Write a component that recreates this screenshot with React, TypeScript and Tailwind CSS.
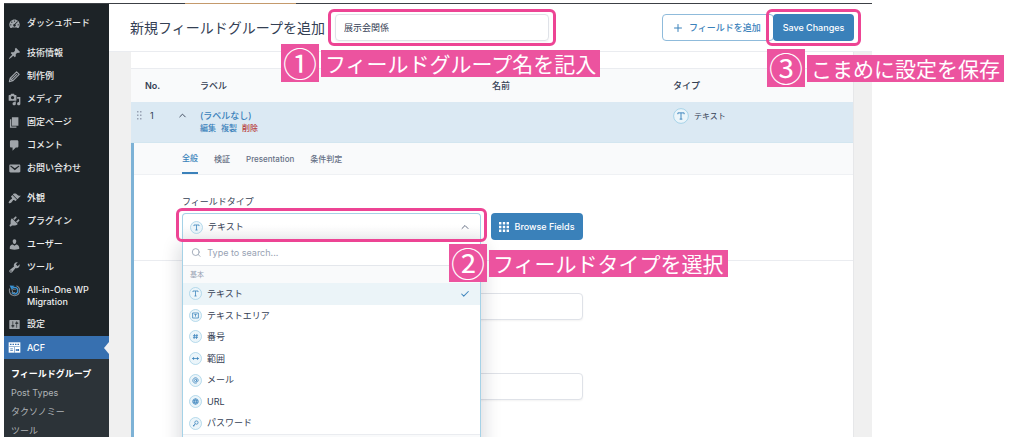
import React, { useState } from "react";
import { Check, ChevronUp, Plus, Search } from "lucide-react";

type MenuItem = { label: string; icon: React.ReactNode };

function Dash({ d, children }: { d?: string; children?: React.ReactNode }) {
  return (
    <svg viewBox="0 0 20 20" className="h-[13px] w-[13px] shrink-0" fill="currentColor" fillRule="evenodd" aria-hidden="true">
      {d && <path d={d} />}
      {children}
    </svg>
  );
}

const dashboardIcon = (
  <Dash d="M3.76 17h12.48C17.34 15.63 18 13.9 18 12c0-4.41-3.58-8-8-8s-8 3.59-8 8c0 1.9.66 3.63 1.76 5z">
    <g fill="#1d2327">
      <circle cx="10" cy="6.2" r="1" />
      <circle cx="5.8" cy="8" r="1" />
      <circle cx="4.3" cy="12" r="1" />
      <circle cx="15.7" cy="12" r="1" />
      <path d="M15.4 7.2l-4 4.1a2 2 0 1 1-1.3-.6l4.2-4.2z" />
      <path d="M6 15.4h8v.8H6z" />
    </g>
  </Dash>
);

const groups: MenuItem[][] = [
  [{ label: "ダッシュボード", icon: dashboardIcon }],
  [
    {
      label: "技術情報",
      icon: <Dash d="M10.44 3.02l1.82-1.82 6.36 6.35-1.83 1.82c-1.05-.68-2.48-.57-3.41.36l-.75.75c-.92.93-1.04 2.35-.35 3.41l-1.83 1.82-2.41-2.41-2.8 2.79c-.42.42-3.38 2.71-3.8 2.29s1.86-3.39 2.28-3.81l2.79-2.79L4.1 9.36l1.83-1.82c1.05.69 2.48.57 3.4-.36l.75-.75c.93-.92 1.05-2.35.36-3.41z" />,
    },
    {
      label: "制作例",
      icon: (
        <svg viewBox="0 0 20 20" className="h-[13px] w-[13px] shrink-0" fill="none" stroke="currentColor" strokeWidth="1.7" strokeLinejoin="round" aria-hidden="true">
          <path d="M13.2 2.8l4 4L7.3 16.6l-5.2 1.3 1.3-5.2zM5.6 14.4l8.2-8.2M3.5 12.8l3.8 3.8" />
        </svg>
      ),
    },
    {
      label: "メディア",
      icon: <Dash d="M13 11V4c0-.55-.45-1-1-1h-1.67L9 1H5L3.67 3H2c-.55 0-1 .45-1 1v7c0 .55.45 1 1 1h10c.55 0 1-.45 1-1zM7 4.5c1.38 0 2.5 1.12 2.5 2.5S8.38 9.5 7 9.5 4.5 8.38 4.5 7 5.62 4.5 7 4.5zM14 6h5v10.5c0 1.38-1.12 2.5-2.5 2.5S14 17.88 14 16.5s1.12-2.5 2.5-2.5c.17 0 .34.02.5.05V9h-3V6zm-4 8.05V13h2v3.5c0 1.38-1.12 2.5-2.5 2.5S7 17.88 7 16.5 8.12 14 9.5 14c.17 0 .34.02.5.05z" />,
    },
    { label: "固定ページ", icon: <Dash d="M6 15V2h10v13H6zm-1 1h8v2H3V5h2v11z" /> },
    { label: "コメント", icon: <Dash d="M5 2h9c1.1 0 2 .9 2 2v7c0 1.1-.9 2-2 2h-2l-5 5v-5H5c-1.1 0-2-.9-2-2V4c0-1.1.9-2 2-2z" /> },
    {
      label: "お問い合わせ",
      icon: <Dash d="M3.87 4h13.25C18.37 4 19 4.59 19 5.79v8.42c0 1.19-.63 1.79-1.88 1.79H3.87c-1.25 0-1.88-.6-1.88-1.79V5.79c0-1.2.63-1.79 1.88-1.79zm6.62 8.6l6.74-5.53c.24-.2.43-.66.13-1.07-.29-.41-.82-.42-1.17-.17l-5.7 3.86L4.8 5.83c-.35-.25-.88-.24-1.17.17-.3.41-.11.87.13 1.07z" />,
    },
  ],
  [
    {
      label: "外観",
      icon: <Dash d="M14.48 11.06L7.41 3.99l1.5-1.5c.5-.56 2.3-.47 3.51.32 1.21.8 1.43 1.28 2.91 2.1 1.18.64 2.45 1.26 4.45.85zm-.71.71L6.7 4.7 4.93 6.47c-.39.39-.39 1.02 0 1.41l1.06 1.06c.39.39.39 1.03 0 1.42-.6.6-1.43 1.11-2.21 1.69-.35.26-.7.53-1.01.84C1.43 14.23.4 16.08 1.4 17.07c.99 1 2.84-.03 4.18-1.36.31-.31.58-.66.85-1.02.57-.78 1.08-1.61 1.69-2.21.39-.39 1.02-.39 1.41 0l1.06 1.06c.39.39 1.02.39 1.41 0z" />,
    },
    {
      label: "プラグイン",
      icon: <Dash d="M13.11 4.36L9.87 7.6 8 5.73l3.24-3.24c.35-.34 1.05-.2 1.56.32.52.51.66 1.21.31 1.55zm-8 1.77l.91-1.12 9.01 9.01-1.19.84c-.71.71-2.63 1.16-3.82 1.16H6.14L4.9 17.26c-.59.59-1.54.59-2.12 0-.59-.58-.59-1.53 0-2.12l1.24-1.24v-3.88c0-1.13.4-3.19 1.09-3.89zm7.26 3.97l3.24-3.24c.34-.35 1.04-.21 1.55.31.52.51.66 1.21.31 1.55l-3.24 3.25z" />,
    },
    {
      label: "ユーザー",
      icon: <Dash d="M10 9.25c-2.27 0-2.73-3.44-2.73-3.44C7 4.02 7.82 2 9.97 2c2.16 0 2.98 2.02 2.71 3.81 0 0-.41 3.44-2.68 3.44zm0 2.57L12.72 10c2.39 0 4.52 2.33 4.52 4.53v2.49s-3.65 1.13-7.24 1.13c-3.65 0-7.24-1.13-7.24-1.13v-2.49c0-2.25 1.94-4.48 4.47-4.48z" />,
    },
    {
      label: "ツール",
      icon: <Dash d="M16.68 9.77c-1.34 1.34-3.3 1.67-4.95.99l-5.41 6.52c-.99.99-2.59.99-3.58 0s-.99-2.59 0-3.57l6.52-5.42c-.68-1.65-.35-3.61.99-4.95 1.28-1.28 3.12-1.62 4.72-1.06l-2.89 2.89 2.82 2.82 2.86-2.87c.53 1.58.18 3.39-1.08 4.65zM3.81 16.21c.4.39 1.04.39 1.43 0 .4-.4.4-1.04 0-1.43-.39-.4-1.03-.4-1.43 0-.39.39-.39 1.03 0 1.43z" />,
    },
    {
      label: "All-in-One WP Migration",
      icon: (
        <svg viewBox="0 0 20 20" className="h-[13px] w-[13px] shrink-0" fill="none" aria-hidden="true">
          <path d="M13 2.6A8 8 0 1 1 2.600 7" stroke="#7d8288" strokeWidth="1.8" />
          <path d="M5.500 8.500A5 5 0 1 1 6 13" stroke="#3a93d4" strokeWidth="2.200" />
          <path d="M2.500 2.200l7.500.6-5 5z" fill="#3a93d4" />
          <path d="M11 13a2.800 2.800 0 1 1 1-3.500" stroke="#8b9096" strokeWidth="1.500" />
        </svg>
      ),
    },
    {
      label: "設定",
      icon: <Dash d="M18 16V4c0-.55-.45-1-1-1H3c-.55 0-1 .45-1 1v12c0 .55.45 1 1 1h14c.55 0 1-.45 1-1zM8 11h1c.55 0 1 .45 1 1s-.45 1-1 1H8v1.5c0 .28-.22.5-.5.5s-.5-.22-.5-.5V13H6c-.55 0-1-.45-1-1s.45-1 1-1h1V5.5c0-.28.22-.5.5-.5s.5.22.5.5V11zm5-2h-1c-.55 0-1-.45-1-1s.45-1 1-1h1V5.5c0-.28.22-.5.5-.5s.5.22.5.5V7h1c.55 0 1 .45 1 1s-.45 1-1 1h-1v5.5c0 .28-.22.5-.5.5s-.5-.22-.5-.5V9z" />,
    },
  ],
];

function Sidebar() {
  return (
    <nav className="w-[105px] shrink-0 bg-[#1d2327] pt-2 text-[9px] font-medium text-[#eceded]">
      <div className="flex flex-col gap-[7px]">
        {groups.map((items, i) => (
          <ul key={i}>
            {items.map((item) => (
              <li key={item.label}>
                <a href="#" className="flex min-h-[23px] items-start gap-[6px] py-[5px] pl-1 leading-3">
                  <span className="text-[#a0a5aa]">{item.icon}</span>
                  <span className="w-[72px]">{item.label}</span>
                </a>
              </li>
            ))}
          </ul>
        ))}
      </div>
      <a href="#" aria-current="page" className="relative flex h-[23px] items-center gap-[6px] bg-[#3770b0] pl-1 text-white">
        <Dash>
          <path d="M1 2h18v16H1z" />
          <g fill="#3770b0">
            <path d="M2 8.600h16v.8H2zM9.600 9.400v8.600h.8V9.400z" />
            <path d="M3 4.200h2.400v2H3zM7 4.200h2.200v2H7zM10.800 4.200H13v2h-2.200zM14.600 4.200H17v2h-2.400z" />
            <path d="M3.500 11.600h4v1h-4zM3.500 14.400h4v1h-4zM12 12.400h5v3h-5z" />
          </g>
          <path d="M12.800 13.400h2.400v1h-2.400z" />
        </Dash>
        ACF
        <span className="absolute right-0 top-[6px] border-y-[6px] border-r-[5px] border-y-transparent border-r-[#f0f0f1]" />
      </a>
      <ul className="h-full bg-[#2c3338] pl-[7px] pt-[5px] font-normal leading-[19px] text-[#b0b3b7]">
        <li><a href="#" className="font-bold text-white">フィールドグループ</a></li>
        <li><a href="#">Post Types</a></li>
        <li><a href="#">タクソノミー</a></li>
        <li><a href="#">ツール</a></li>
      </ul>
    </nav>
  );
}

function Note({ mark, text, className }: { mark: string; text: string; className: string }) {
  return (
    <div className={`absolute z-30 flex items-center gap-[2px] whitespace-nowrap font-['Noto_Sans_CJK_JP',sans-serif] text-white ${className}`}>
      <span className="flex h-[38px] w-[38px] items-center justify-center bg-[#ec539f] text-[34px] leading-[38px]">{mark}</span>
      <span className="h-[27px] bg-[#ec539f] px-1 text-[21px] leading-[27px]">{text}</span>
    </div>
  );
}

function Frame({ className }: { className: string }) {
  return <span className={`pointer-events-none absolute z-20 rounded-md border-[3px] border-[#ed4494] ${className}`} />;
}

const glyphs: Record<string, React.ReactNode> = {
  text: <path d="M6.5 8V6.5h7V8M10 6.5v7M8.5 13.5h3" />,
  area: <path d="M6 6.5h8v7H6zM8.4 8.6h3.2M10 8.6v3" />,
  number: <path d="M8.8 6.5l-.8 7M12 6.5l-.8 7M6.5 8.8h7M6.5 11.2h7" />,
  range: (
    <>
      <path d="M6 10h8" />
      <path d="M7.4 8.6L5.8 10l1.6 1.4zM12.6 8.6l1.6 1.4-1.6 1.4z" fill="currentColor" />
    </>
  ),
  mail: (
    <>
      <circle cx="10" cy="10" r="1.5" />
      <path d="M11.5 8.5v2.2c0 1.3 2.2 1.2 2.2-.7a3.7 3.7 0 1 0-1.6 3" />
    </>
  ),
  url: (
    <>
      <circle cx="10" cy="10" r="3.8" />
      <path d="M6.2 9h7.6M6.2 11h7.6M10 6.2c-2 2-2 5.6 0 7.6M10 6.2c2 2 2 5.6 0 7.6" />
    </>
  ),
  password: (
    <>
      <circle cx="11.3" cy="8.7" r="2.3" />
      <path d="M9.6 10.4l-3 3h1.8M8 12v1.4" />
    </>
  ),
};

function TypeIcon({ kind, large }: { kind: string; large?: boolean }) {
  return (
    <svg
      viewBox="1 1 18 18"
      className={large ? "h-4 w-4 shrink-0 text-[#3f86bd]" : "h-[13px] w-[13px] shrink-0 text-[#3f86bd]"}
      fill="none"
      stroke="currentColor"
      strokeWidth="1.1"
      aria-hidden="true"
    >
      <circle cx="10" cy="10" r="8.3" fill="#ebf5fa" stroke="#a5d2e7" />
      {glyphs[kind]}
    </svg>
  );
}

const types = [
  ["text", "テキスト"],
  ["area", "テキストエリア"],
  ["number", "番号"],
  ["range", "範囲"],
  ["mail", "メール"],
  ["url", "URL"],
  ["password", "パスワード"],
];

function TypePicker() {
  const [selected, setSelected] = useState("text");
  const current = types.find(([kind]) => kind === selected)!;
  return (
    <div className="relative w-[299px]">
      <button
        type="button"
        id="field-type"
        aria-haspopup="listbox"
        aria-expanded="true"
        className="flex h-[27px] w-full items-center gap-[5px] rounded-t border border-b-0 border-[#a5d2e7] bg-linear-to-b from-white from-40% to-[#f3f3f4] px-[7px] text-[9px] text-[#344054]"
      >
        <TypeIcon kind={current[0]} />
        <span className="flex-1 text-left">{current[1]}</span>
        <ChevronUp size={12} strokeWidth={2} className="mr-[2px] text-[#667085]" />
      </button>
      <div className="absolute inset-x-0 top-full z-10 border-x border-[#a5d2e7] bg-white text-[9px] text-[#344054] shadow-[0_8px_16px_4px_rgba(16,24,40,0.14)]">
        <label className="flex h-[26px] items-center gap-[6px] border-b border-[#e4e7ec] px-2">
          <Search size={11} strokeWidth={2} className="text-[#98a2b3]" />
          <input aria-label="Type to search..." placeholder="Type to search..." className="w-full outline-none placeholder:text-[#98a2b3]" />
        </label>
        <div className="h-[17px] bg-[#f9fafb] px-[7px] text-[7px] leading-[17px] text-[#98a2b3]">基本</div>
        <ul role="listbox" aria-labelledby="field-type-label" className="grid h-[151px] grid-rows-7">
          {types.map(([kind, label]) => (
            <li
              key={kind}
              role="option"
              aria-selected={kind === selected}
              onClick={() => setSelected(kind)}
              className={`flex items-center gap-[5px] pl-[6px] pr-[10px] ${kind === selected ? "bg-[#ebf4f8]" : ""}`}
            >
              <TypeIcon kind={kind} />
              <span className="flex-1">{label}</span>
              {kind === selected && <Check size={10} strokeWidth={2.5} className="text-[#3f86bd]" />}
            </li>
          ))}
        </ul>
        <div className="h-6 border-t border-[#eaecf0] bg-[#f9fafb]" />
      </div>
      <Frame className="-inset-x-[6px] -bottom-[2px] -top-[5px]" />
      <Note mark="②" text="フィールドタイプを選択" className="left-[267px] top-[31px]" />
    </div>
  );
}

function FieldTable() {
  return (
    <table className="w-full table-fixed border-collapse text-left text-[9px] text-[#344054]">
      <thead>
        <tr className="h-[33px] border-t border-[#eaecf0] bg-[#f9fafb]">
          <th className="w-[69px] pl-[14px] font-semibold">No.</th>
          <th className="w-[292px] font-medium">ラベル</th>
          <th className="w-[181px] font-medium">名前</th>
          <th className="font-medium">タイプ</th>
        </tr>
      </thead>
      <tbody>
        <tr className="h-[41px] border-b border-[#d3e6f0] bg-[#dbe9f3] align-top">
          <td className="pt-[7px]">
            <div className="flex h-[14px] items-center pl-[6px]">
              <svg viewBox="0 0 5 9" className="h-[9px] w-[5px]" fill="#98a2b3" aria-hidden="true">
                <path d="M0 0h1.5v1.5H0zM3 0h1.5v1.5H3zM0 3.5h1.5V5H0zM3 3.5h1.5V5H3zM0 7h1.5v1.5H0zM3 7h1.5v1.5H3z" />
              </svg>
              <span className="ml-2 w-[27px]">1</span>
              <ChevronUp size={11} strokeWidth={2} />
            </div>
          </td>
          <td className="pt-[7px]">
            <a href="#" className="block text-[9px] font-medium leading-[13px] text-[#3b82bb]">(ラベルなし)</a>
            <div className="flex gap-[5px] text-[8px] font-medium leading-[12px] text-[#3b82bb]">
              <a href="#">編集</a>
              <a href="#">複製</a>
              <a href="#" className="text-[#b8403c]">削除</a>
            </div>
          </td>
          <td />
          <td className="pt-[6px]">
            <div className="flex h-4 items-center gap-[5px] text-[8px]">
              <TypeIcon kind="text" large />
              テキスト
            </div>
          </td>
        </tr>
      </tbody>
    </table>
  );
}

const inputClass = "block h-[27px] w-[401px] rounded border border-[#dfe2e8] bg-white px-2 text-[9px] shadow-xs";

export default function App() {
  return (
    <div className="h-screen overflow-hidden bg-white pl-1 pr-[152px] pt-[3px] font-[Inter,'Noto_Sans_CJK_JP',sans-serif]">
      <div className="h-px bg-[#3c4045] pl-[181px]">
        <div className="h-px w-[111px] bg-[#c49a6c]" />
      </div>
      <div className="flex h-full">
        <Sidebar />
        <div className="min-w-0 flex-1 bg-[#f0f0f0]">
          <header className="relative z-20 flex h-12 items-center border-b border-[#eaecf0] bg-white pl-[21px] pr-[18px]">
            <h1 className="w-[205px] whitespace-nowrap text-[14px] text-[#344054]">新規フィールドグループを追加</h1>
            <div className="relative">
              <input
                aria-label="フィールドグループ名"
                defaultValue="展示会関係"
                className="block h-[27px] w-[214px] rounded border border-[#dfe2e8] px-2 text-[9px] text-[#344054] shadow-xs"
              />
              <Frame className="-inset-x-[7px] -inset-y-[5px]" />
              <Note mark="①" text="フィールドグループ名を記入" className="-left-[54px] top-[30px]" />
            </div>
            <button type="button" className="-mr-px ml-auto flex h-[27px] w-[112px] items-center gap-[5px] whitespace-nowrap rounded border border-[#8fbbdb] px-[9px] text-[9px] font-medium text-[#3b82bb]">
              <Plus size={12} strokeWidth={2} className="shrink-0" />
              フィールドを追加
            </button>
            <div className="relative">
              <button type="button" className="block h-[27px] w-[81px] rounded bg-[#3a81ba] text-[9px] font-medium text-white">Save Changes</button>
              <Frame className="-inset-x-[7px] -inset-y-[5px]" />
              <Note mark="③" text="こまめに設定を保存" className="-left-[6px] top-[35px]" />
            </div>
          </header>
          <main className="ml-[22px] mr-[18px] h-full border-r border-[#e6e7e9] bg-white">
            <div className="h-4" />
            <FieldTable />
            <div className="h-full border-l-[3px] border-[#7db2d6]">
              <div className="flex h-8 gap-4 border-b border-[#eff1f4] bg-[#f9fafb] pl-12 text-[8px] font-medium text-[#667085]">
                <button type="button" className="border-b-2 border-[#3a81ba] text-[#3a81ba]">全般</button>
                <button type="button">検証</button>
                <button type="button">Presentation</button>
                <button type="button">条件判定</button>
              </div>
              <section className="h-[86px] border-b border-[#eaecf0] pl-12 pt-5">
                <label id="field-type-label" htmlFor="field-type" className="block h-[18px] text-[9px] leading-[14px] text-[#344054]">フィールドタイプ</label>
                <div className="flex gap-[10px]">
                  <TypePicker />
                  <button type="button" className="flex h-[27px] w-[92px] items-center justify-center gap-[5px] whitespace-nowrap rounded bg-[#3a81ba] text-[9px] font-medium text-white">
                    <svg viewBox="0 0 10 10" className="h-[10px] w-[10px]" fill="currentColor" aria-hidden="true">
                      <path d="M0 0h2.4v2.4H0zM3.8 0h2.4v2.4H3.8zM7.6 0H10v2.4H7.6zM0 3.8h2.4v2.4H0zM3.8 3.8h2.4v2.4H3.8zM7.6 3.8H10v2.4H7.6zM0 7.6h2.4V10H0zM3.8 7.6h2.4V10H3.8zM7.6 7.6H10V10H7.6z" />
                    </svg>
                    Browse Fields
                  </button>
                </div>
              </section>
              <section className="flex flex-col gap-[53px] pl-12 pt-8">
                <input aria-label="フィールドラベル" className={inputClass} />
                <input aria-label="フィールド名" className={inputClass} />
              </section>
            </div>
          </main>
        </div>
      </div>
    </div>
  );
}
